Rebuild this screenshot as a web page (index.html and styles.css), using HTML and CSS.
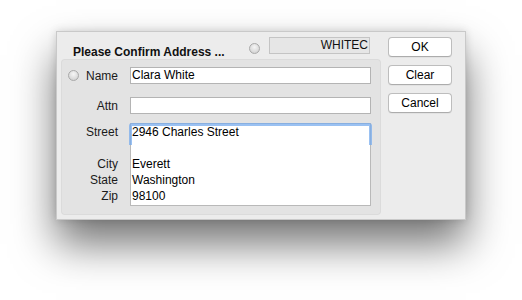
FILE: index.html
```html
<!DOCTYPE html>
<html>
<head>
<meta charset="utf-8">
<link rel="stylesheet" href="styles.css">
</head>
<body>
<div class="window">
  <div class="main">
    <div class="header">
      <div class="title">Please Confirm Address ...</div>
      <span class="radio"></span>
      <div class="code">WHITEC</div>
    </div>
    <div class="panel">
      <div class="row row-name">
        <div class="label"><span class="radio radio-name"></span>Name</div>
        <div class="field">Clara White</div>
      </div>
      <div class="row row-attn">
        <div class="label">Attn</div>
        <div class="field"></div>
      </div>
      <div class="row row-addr">
        <div class="addr-labels">
          <div>Street</div>
          <div>&nbsp;</div>
          <div>City</div>
          <div>State</div>
          <div>Zip</div>
        </div>
        <div class="addr-box">
          <div>2946 Charles Street</div>
          <div>&nbsp;</div>
          <div>Everett</div>
          <div>Washington</div>
          <div>98100</div>
        </div>
      </div>
    </div>
  </div>
  <div class="buttons">
    <button class="btn">OK</button>
    <button class="btn">Clear</button>
    <button class="btn">Cancel</button>
  </div>
</div>
</body>
</html>
```

FILE: styles.css
```css
html, body {
  margin: 0;
  padding: 0;
  background: #ffffff;
}

body {
  box-sizing: border-box;
  min-height: 300px;
  font-family: "Liberation Sans", Arial, sans-serif;
  font-size: 12px;
  color: #111;
  padding-top: 31px;
  padding-left: 56px;
  padding-bottom: 80px;
}

.window {
  box-sizing: border-box;
  width: 410px;
  height: 189px;
  background: #ececec;
  border: 1px solid #c9c9c9;
  padding: 5px 13px 4px 4px;
  display: flex;
  gap: 7px;
  box-shadow: 0 24px 40px rgba(0, 0, 0, 0.55), 0 0 8px rgba(0, 0, 0, 0.15);
}

.main {
  width: 320px;
  display: flex;
  flex-direction: column;
}

.header {
  height: 22px;
  display: flex;
  align-items: flex-start;
}

.title {
  flex: 1;
  align-self: flex-end;
  padding-left: 12px;
  font-weight: bold;
  line-height: 14px;
  color: #111;
}

.radio {
  box-sizing: border-box;
  width: 11px;
  height: 11px;
  border-radius: 50%;
  border: 1px solid #a9a9a9;
  background: radial-gradient(circle at 50% 35%, #f6f6f6 0%, #dcdcdc 60%, #c8c8c8 100%);
  display: inline-block;
  flex: none;
}

.header .radio {
  margin-top: 6px;
}

.code {
  box-sizing: border-box;
  margin-left: 9px;
  margin-right: 11px;
  width: 101px;
  height: 17px;
  background: #e6e6e6;
  border: 1px solid #c4c4c4;
  text-align: right;
  padding-right: 1px;
  line-height: 15px;
  color: #111;
}

.panel {
  box-sizing: border-box;
  height: 156px;
  background: #e3e3e3;
  border-radius: 4px;
  box-shadow: inset 0 0 0 1px rgba(0, 0, 0, 0.035);
  padding: 8px 10px 9px 0;
  display: flex;
  flex-direction: column;
}

.row {
  display: grid;
  grid-template-columns: 57px 241px;
  column-gap: 12px;
  align-items: center;
}

.row-attn {
  margin-top: 13px;
}

.row-addr {
  margin-top: 9px;
  align-items: start;
}

.label {
  display: flex;
  justify-content: flex-end;
  align-items: center;
  color: #1a1a1a;
}

.row-name .label {
  justify-content: space-between;
  padding-left: 7px;
}

.field {
  box-sizing: border-box;
  height: 17px;
  background: #fff;
  border: 1px solid #b4b4b4;
  padding: 0 1px;
  line-height: 15px;
  color: #000;
}

.addr-labels {
  text-align: right;
  line-height: 16px;
  padding-top: 1px;
  color: #1a1a1a;
}

.addr-box {
  position: relative;
  box-sizing: border-box;
  background: #fff;
  border: 1px solid #b9b9b9;
  padding: 0 1px 1px;
  line-height: 16px;
  color: #000;
}

.addr-box::before {
  content: "";
  position: absolute;
  top: -1px;
  left: -2px;
  right: -2px;
  height: 19px;
  border: 3px solid rgba(120, 172, 238, 0.75);
  border-bottom: none;
  border-radius: 3px 3px 0 0;
  pointer-events: none;
}

.buttons {
  width: 64px;
  display: flex;
  flex-direction: column;
  gap: 8px;
}

.btn {
  box-sizing: border-box;
  width: 64px;
  height: 20px;
  margin: 0;
  padding: 0;
  background: #ffffff;
  border: 1px solid #bdbdbd;
  border-bottom-color: #acacac;
  border-radius: 4px;
  font-family: "Liberation Sans", Arial, sans-serif;
  font-size: 12px;
  color: #000;
  line-height: 18px;
  box-shadow: 0 1px 0 rgba(0, 0, 0, 0.04);
}
```
